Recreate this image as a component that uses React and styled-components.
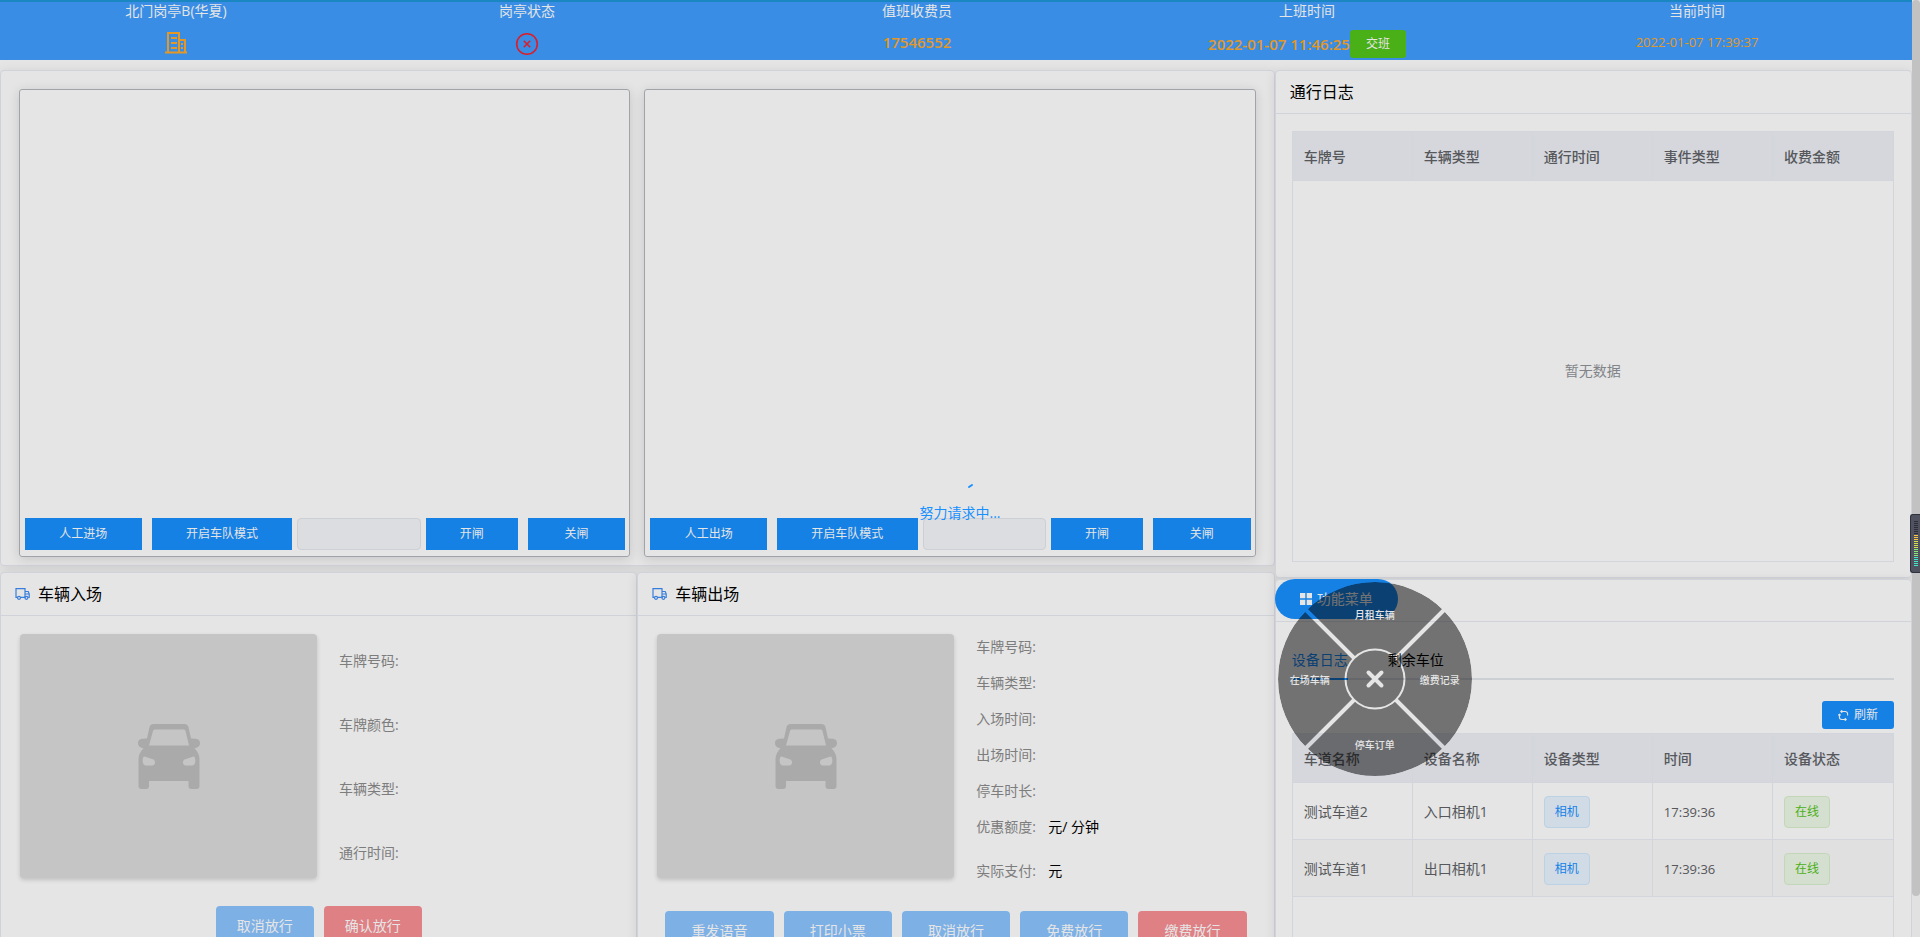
import React from 'react';
import styled, { createGlobalStyle, css } from 'styled-components';

const Global = createGlobalStyle`
  *, *::before, *::after { box-sizing: border-box; }
  body {
    margin: 0;
    background: #fff;
    color: #000;
    font: 14px/20px "Open Sans", "Noto Sans", "Noto Sans CJK SC", sans-serif;
  }
  button, input { font: inherit; margin: 0; }
  button { cursor: pointer; }
`;

const Shell = styled.div`
  display: flex;
  height: 100vh;
  overflow: hidden;
  position: relative;
`;
const Page = styled.div`
  flex: 1;
  min-width: 0;
  height: 100%;
  overflow: hidden;
`;
const Rail = styled.div`
  flex: none;
  width: 8px;
  background: #fbfbfb;
`;
const Thumb = styled.div`
  height: 896px;
  border-radius: 4px;
  background: #d8d8d8;
`;

/* ---------- top bar ---------- */
const TopBar = styled.header`
  display: flex;
  height: 60px;
  padding: 0 20px;
  background: #409eff;
  border-top: 2px solid #1f97d9;
  color: #fff;
  position: relative;
`;
const TopCell = styled.div`
  flex: ${(p) => p.$span} 1 0;
  display: flex;
  flex-direction: column;
  align-items: center;
`;
const TopLabel = styled.div`
  height: 18px;
  line-height: 18px;
`;
const TopValue = styled.div`
  flex: 1;
  display: flex;
  align-items: center;
  padding-top: ${(p) => p.$drop || 6}px;
  color: #ffa929;
  font-size: ${(p) => (p.$strong ? '15px' : '14px')};
  font-weight: ${(p) => (p.$strong ? 600 : 400)};
`;

const fills = { primary: '#1890ff', success: '#52c41a', softBlue: '#8cc5ff', softRed: '#f98f95' };
const Button = styled.button`
  display: inline-flex;
  align-items: center;
  justify-content: center;
  gap: 5px;
  border: 0;
  padding: 0 16px;
  color: #fff;
  white-space: nowrap;
  height: 40px;
  border-radius: 4px;
  background: ${(p) => fills[p.$tone || 'primary']};
  ${(p) =>
    p.$small &&
    css`
      height: 28px;
      border-radius: 3px;
      font-size: 12px;
      font-weight: 400;
    `}
`;

/* ---------- cards ---------- */
const Main = styled.main`
  display: grid;
  grid-template-columns: 2fr 1fr;
  align-items: start;
  padding-top: 10px;
`;
const Column = styled.div`
  min-width: 0;
  display: flex;
  flex-direction: column;
  gap: ${(p) => p.$gap}px;
`;
const Card = styled.section`
  min-width: 0;
  background: #fff;
  border: 1px solid #e9ebf3;
  border-radius: 4px;
  box-shadow: 0 2px 12px rgba(0, 0, 0, 0.1);
  position: relative;
`;
const CardHead = styled.div`
  display: flex;
  align-items: center;
  gap: 8px;
  height: 43px;
  padding: 0 14px;
  border-bottom: 1px solid #e9ebf3;
`;
const Title = styled.h2`
  margin: 0;
  font-size: 16px;
  line-height: 24px;
  font-weight: 400;
`;

/* ---------- lanes ---------- */
const Lanes = styled.div`
  display: grid;
  grid-template-columns: 1fr 1fr;
  gap: 14px;
  padding: 18px 18px 8px;
`;
const Lane = styled.div`
  display: flex;
  flex-direction: column;
  justify-content: flex-end;
  height: 468px;
  padding: 0 4px 6px 5px;
  border: 1px solid #b4b6be;
  border-radius: 3px;
  box-shadow: 0 2px 12px rgba(0, 0, 0, 0.14);
`;
const LaneBar = styled.div`
  display: flex;
  gap: 5px;
`;
const Pair = styled.div`
  display: flex;
  gap: 10px;
  flex: ${(p) => p.$grow} 1 10px;
`;
const LaneButton = styled.button`
  flex: ${(p) => p.$grow} 1 0;
  min-width: 0;
  height: 32px;
  padding: 0;
  border: 0;
  background: #1890ff;
  color: #fff;
  font-size: 12px;
  white-space: nowrap;
`;
const LaneInput = styled.input`
  flex: 122 1 0;
  min-width: 0;
  height: 32px;
  border: 1px solid #e4e7ed;
  border-radius: 4px;
  background: #f5f6fa;
  padding: 0;
`;

/* ---------- vehicles ---------- */
const Vehicles = styled.div`
  display: grid;
  grid-template-columns: 1fr 1fr;
`;
const VehicleBody = styled.div`
  display: flex;
  gap: 22px;
  padding: 18px 19px 0;
`;
const Photo = styled.div`
  flex: none;
  width: 50%;
  max-width: 297px;
  height: 244px;
  display: flex;
  align-items: center;
  justify-content: center;
  border-radius: 4px;
  background: #dcdcdc;
  color: #bebebe;
  box-shadow: 0 2px 4px rgba(0, 0, 0, 0.16);
`;
const Fields = styled.dl`
  margin: 0;
  padding-top: ${(p) => (p.$roomy ? 17 : 3)}px;
  display: flex;
  flex-direction: column;
  gap: ${(p) => (p.$roomy ? 44 : 16)}px;
`;
const Field = styled.div`
  display: flex;
  gap: 12px;
  line-height: 20px;
  padding-top: ${(p) => (p.$apart ? 8 : 0)}px;
`;
const Term = styled.dt`
  color: #8c8c8c;
  min-width: 60px;
`;
const Value = styled.dd`
  margin: 0;
`;
const Actions = styled.div`
  display: flex;
  justify-content: center;
  gap: 10px;
  padding: ${(p) => (p.$fill ? '30px 27px 22px' : '28px 27px 24px')};
  ${Button} {
    flex: ${(p) => (p.$fill ? '1 1 0' : '0 0 98px')};
    padding: 0;
  }
`;

/* ---------- tables ---------- */
const TableFrame = styled.div`
  height: ${(p) => p.$height}px;
  display: flex;
  flex-direction: column;
  border: 1px solid #ebeef5;
`;
const Table = styled.table`
  width: 100%;
  table-layout: fixed;
  border-collapse: separate;
  border-spacing: 0;
  color: #606266;
`;
const Th = styled.th`
  height: 49px;
  padding: 2px 11px 0;
  text-align: left;
  font-weight: 500;
  background: #eef0f6;
  border-bottom: 1px solid #ebeef5;
  border-right: 1px solid #ebeef5;
  &:last-child { border-right: 0; }
`;
const Td = styled.td`
  height: 57px;
  padding: 2px 11px 0;
  border-bottom: 1px solid #ebeef5;
  border-right: 1px solid #ebeef5;
  &:last-child { border-right: 0; }
`;
const Tr = styled.tr`
  background: ${(p) => (p.$striped ? '#fafafa' : '#fff')};
`;
const Time = styled.time`
  font-size: 13px;
`;
const Empty = styled.div`
  flex: 1;
  display: flex;
  align-items: center;
  justify-content: center;
  color: #909399;
`;
const tags = {
  blue: ['#e8f4ff', '#d1e9ff', '#1890ff'],
  green: ['#eef9e8', '#d9f0cd', '#52c41a'],
};
const Tag = styled.span`
  display: inline-block;
  vertical-align: middle;
  height: 32px;
  line-height: 30px;
  padding: 0 10px;
  font-size: 12px;
  border-radius: 4px;
  background: ${(p) => tags[p.$tone][0]};
  border: 1px solid ${(p) => tags[p.$tone][1]};
  color: ${(p) => tags[p.$tone][2]};
`;

const LogBody = styled.div`
  padding: 17px 17px 15px 16px;
`;
const Tabs = styled.div`
  display: flex;
  gap: 40px;
  border-bottom: 2px solid #e4e7ed;
`;
const Tab = styled.button`
  height: 41px;
  margin-bottom: -2px;
  padding: 2px 0 0;
  border: 0;
  border-bottom: 2px solid ${(p) => (p.$on ? '#1890ff' : 'transparent')};
  background: none;
  color: ${(p) => (p.$on ? '#1890ff' : '#000')};
`;
const Tools = styled.div`
  display: flex;
  justify-content: flex-end;
  padding: 21px 0 4px;
`;

/* ---------- function menu ---------- */
const MenuHead = styled.div`
  height: 42px;
  border-bottom: 1px solid #e9ebf3;
`;
const MenuButton = styled(Button)`
  margin: -1px 0 0 -1px;
  width: 123px;
  border-radius: 20px;
`;
const Wheel = styled.div`
  position: absolute;
  left: 2px;
  top: 2px;
  width: 194px;
  height: 194px;
  z-index: 2;
`;
const WheelItem = styled.button`
  position: absolute;
  left: ${(p) => p.$x}px;
  top: ${(p) => p.$y}px;
  transform: translate(-50%, -50%);
  padding: 0;
  border: 0;
  background: none;
  color: #fff;
  font-size: 10px;
  font-weight: 500;
  line-height: 14px;
  white-space: nowrap;
`;

/* ---------- loading mask and level meter ---------- */
const Mask = styled.div`
  position: absolute;
  inset: 0;
  z-index: 5;
  background: rgba(0, 0, 0, 0.1);
  display: flex;
  flex-direction: column;
  align-items: center;
  gap: 12px;
  padding-top: 449px;
  color: #1890ff;
`;
const Meter = styled.div`
  position: absolute;
  right: 0;
  top: 514px;
  z-index: 6;
  width: 10px;
  height: 59px;
  padding: 6px 2px 0 3px;
  display: flex;
  flex-direction: column;
  gap: 1px;
  background: #50535f;
  border: 1px solid #2f323d;
  border-right: 0;
  border-radius: 3px 0 0 3px;
`;
const Tick = styled.i`
  flex: none;
  height: 1px;
  width: 4px;
  background: ${(p) => p.$color};
`;

const BuildingIcon = () => (
  <svg width="24" height="24" viewBox="0 0 24 24" fill="none" stroke="currentColor" strokeWidth="2">
    <path d="M1 21.500h22M4 21V2h11v19M15 9h6v12M7 7h6M7 12h6M7 17h6M17 13h2M17 17h2" />
  </svg>
);
const CircleCloseIcon = () => (
  <svg width="24" height="24" viewBox="0 0 24 24" fill="none" stroke="#f5222d" strokeWidth="1.600">
    <circle cx="12" cy="12" r="10.300" />
    <path d="M8.800 8.800l6.400 6.400M15.200 8.800l-6.400 6.400" />
  </svg>
);
const TruckIcon = () => (
  <svg width="15" height="14" viewBox="0 0 15 14" fill="none" stroke="#3f8cf5" strokeWidth="1.200" aria-hidden="true">
    <path d="M2.300 10.400H1V1.600h9v8.800H5.800M10 4.500h3.200l1 2.300v3.600h-1M10 7h4" />
    <circle cx="4" cy="10.800" r="1.500" />
    <circle cx="11.400" cy="10.800" r="1.500" />
  </svg>
);
const CarIcon = () => (
  <svg width="62" height="65" viewBox="0 0 62 65" fill="currentColor" aria-hidden="true">
    <path
      fillRule="evenodd"
      d="M16 0h30c2.500 0 4 1 4.600 3.400L53 14.500c5 0 9 .5 9 4.500 0 3.500-2.500 5-5.500 5 3 3.500 5 7 5 11v27c0 2-1 3-3 3h-5c-2 0-3-1-3-3v-5H11v5c0 2-1 3-3 3H3.500c-2 0-3-1-3-3V35c0-4 2-7.500 5-11C2.500 24 0 22.500 0 19c0-4 4-4.500 9-4.500l2.400-11.100C12 1 13.500 0 16 0zM17 5.500c-1 0-1.700.5-2 1.500l-4 14.500h40L47.500 7c-.3-1-1-1.500-2-1.500zM6.500 32.500c-2.500 0-2.800 8.500 1 9H14c4 0 3.500-5 1.500-6zM55.500 32.500c2.500 0 2.800 8.500-1 9H48c-4 0-3.500-5-1.500-6z"
    />
  </svg>
);
const GridIcon = () => (
  <svg width="12" height="12" viewBox="0 0 12 12" fill="currentColor" aria-hidden="true">
    <path d="M0 0h5.300v5.300H0zM6.700 0H12v5.300H6.700zM0 6.700h5.300V12H0zM6.700 6.700H12V12H6.700z" />
  </svg>
);
const RefreshIcon = () => (
  <svg width="11" height="11" viewBox="0 0 11 11" fill="none" stroke="currentColor" strokeWidth="1.100" aria-hidden="true">
    <path d="M3 1.500H7.200A2.400 2.400 0 0 1 9.600 3.900V5.600M4.200 .2L2.800 1.500L4.200 2.900M8 9.500H3.800A2.400 2.400 0 0 1 1.400 7.100V4.400M.2 5.400L1.400 4.200L2.800 5.400M6.800 8.100L8.200 9.500L6.800 10.800" />
  </svg>
);
const WheelShape = () => (
  <svg width="194" height="194" viewBox="-97 -97 194 194" aria-hidden="true">
    <mask id="gaps" maskUnits="userSpaceOnUse" x="-97" y="-97" width="194" height="194">
      <circle r="97" fill="#fff" />
      <path d="M-70 -70L70 70M-70 70L70 -70" stroke="#000" strokeWidth="4" />
      <circle r="29.500" fill="#fff" stroke="#000" strokeWidth="2" />
    </mask>
    <circle r="97" fill="rgba(0,0,0,.5)" mask="url(#gaps)" />
    <path d="M-6.500 -6.500L6.500 6.500M-6.500 6.500L6.500 -6.500" stroke="#fff" strokeWidth="4" strokeLinecap="round" />
  </svg>
);
const SpinnerArc = () => (
  <svg width="42" height="42" viewBox="0 0 42 42" fill="none" stroke="#1890ff" strokeWidth="2" strokeLinecap="round" aria-hidden="true">
    <path d="M30 38L33 36" />
  </svg>
);

function LanePanel({ manual }) {
  return (
    <Lane>
      <LaneBar>
        <Pair $grow={258}>
          <LaneButton $grow={117}>{manual}</LaneButton>
          <LaneButton $grow={141}>开启车队模式</LaneButton>
        </Pair>
        <LaneInput aria-label="车牌号" disabled />
        <Pair $grow={190}>
          <LaneButton $grow={92}>开闸</LaneButton>
          <LaneButton $grow={98}>关闸</LaneButton>
        </Pair>
      </LaneBar>
    </Lane>
  );
}

function Vehicle({ title, fields, roomy, buttons }) {
  return (
    <Card>
      <CardHead>
        <TruckIcon />
        <Title>{title}</Title>
      </CardHead>
      <VehicleBody>
        <Photo>
          <CarIcon />
        </Photo>
        <Fields $roomy={roomy}>
          {fields.map(([name, value]) => (
            <Field key={name} $apart={name === '实际支付'}>
              <Term>{name}:</Term>
              <Value>{value}</Value>
            </Field>
          ))}
        </Fields>
      </VehicleBody>
      <Actions $fill={!roomy}>
        {buttons.map((b, i) => (
          <Button key={b} $tone={i === buttons.length - 1 ? 'softRed' : 'softBlue'}>
            {b}
          </Button>
        ))}
      </Actions>
    </Card>
  );
}

const HeadRow = ({ names }) => (
  <thead>
    <tr>
      {names.map((n) => (
        <Th key={n}>{n}</Th>
      ))}
    </tr>
  </thead>
);

const devices = [
  ['测试车道2', '入口相机1', '17:39:36'],
  ['测试车道1', '出口相机1', '17:39:36'],
];
const ticks = [
  ...Array(7).fill('#2b2e38'),
  ...Array(3).fill('#f5c842'),
  ...Array(4).fill('#d6e04e'),
  ...Array(4).fill('#8be878'),
  ...Array(5).fill('#46e6c4'),
];

export default function App() {
  return (
    <Shell>
      <Global />
      <Page>
        <TopBar>
          <TopCell $span={4}>
            <TopLabel>北门岗亭B(华夏)</TopLabel>
            <TopValue><BuildingIcon /></TopValue>
          </TopCell>
          <TopCell $span={5}>
            <TopLabel>岗亭状态</TopLabel>
            <TopValue $drop={7}><CircleCloseIcon /></TopValue>
          </TopCell>
          <TopCell $span={5}>
            <TopLabel>值班收费员</TopLabel>
            <TopValue $strong $drop={4}>17546552</TopValue>
          </TopCell>
          <TopCell $span={5}>
            <TopLabel>上班时间</TopLabel>
            <TopValue $strong $drop={8}>
              <time>2022-01-07 11:46:25</time>
              <Button $small $tone="success">交班</Button>
            </TopValue>
          </TopCell>
          <TopCell $span={5}>
            <TopLabel>当前时间</TopLabel>
            <TopValue $drop={4}>
              <Time>2022-01-07 17:39:37</Time>
            </TopValue>
          </TopCell>
        </TopBar>
        <Main>
          <Column $gap={6}>
            <Card>
              <Lanes>
                <LanePanel manual="人工进场" />
                <LanePanel manual="人工出场" />
              </Lanes>
            </Card>
            <Vehicles>
              <Vehicle
                title="车辆入场"
                roomy
                fields={[['车牌号码'], ['车牌颜色'], ['车辆类型'], ['通行时间']]}
                buttons={['取消放行', '确认放行']}
              />
              <Vehicle
                title="车辆出场"
                fields={[
                  ['车牌号码'],
                  ['车辆类型'],
                  ['入场时间'],
                  ['出场时间'],
                  ['停车时长'],
                  ['优惠额度', '元/ 分钟'],
                  ['实际支付', '元'],
                ]}
                buttons={['重发语音', '打印小票', '取消放行', '免费放行', '缴费放行']}
              />
            </Vehicles>
          </Column>
          <Column $gap={1}>
            <Card>
              <CardHead>
                <Title>通行日志</Title>
              </CardHead>
              <LogBody>
                <TableFrame $height={431}>
                  <Table>
                    <HeadRow names={['车牌号', '车辆类型', '通行时间', '事件类型', '收费金额']} />
                  </Table>
                  <Empty>暂无数据</Empty>
                </TableFrame>
              </LogBody>
            </Card>
            <Card>
              <MenuHead>
                <MenuButton>
                  <GridIcon />
                  功能菜单
                </MenuButton>
              </MenuHead>
              <Wheel>
                <WheelShape />
                <WheelItem $x={97} $y={33}>月租车辆</WheelItem>
                <WheelItem $x={32} $y={98}>在场车辆</WheelItem>
                <WheelItem $x={162} $y={98}>缴费记录</WheelItem>
                <WheelItem $x={97} $y={163}>停车订单</WheelItem>
              </Wheel>
              <LogBody>
                <Tabs>
                  <Tab $on>设备日志</Tab>
                  <Tab>剩余车位</Tab>
                </Tabs>
                <Tools>
                  <Button $small>
                    <RefreshIcon />
                    刷新
                  </Button>
                </Tools>
                <TableFrame $height={360}>
                  <Table>
                    <HeadRow names={['车道名称', '设备名称', '设备类型', '时间', '设备状态']} />
                    <tbody>
                      {devices.map(([lane, name, time], i) => (
                        <Tr key={lane} $striped={i % 2 === 1}>
                          <Td>{lane}</Td>
                          <Td>{name}</Td>
                          <Td><Tag $tone="blue">相机</Tag></Td>
                          <Td><Time>{time}</Time></Td>
                          <Td><Tag $tone="green">在线</Tag></Td>
                        </Tr>
                      ))}
                    </tbody>
                  </Table>
                </TableFrame>
              </LogBody>
            </Card>
          </Column>
        </Main>
      </Page>
      <Rail>
        <Thumb />
      </Rail>
      <Mask>
        <SpinnerArc />
        <div>努力请求中...</div>
      </Mask>
      <Meter>
        {ticks.map((c, i) => (
          <Tick key={i} $color={c} />
        ))}
      </Meter>
    </Shell>
  );
}
